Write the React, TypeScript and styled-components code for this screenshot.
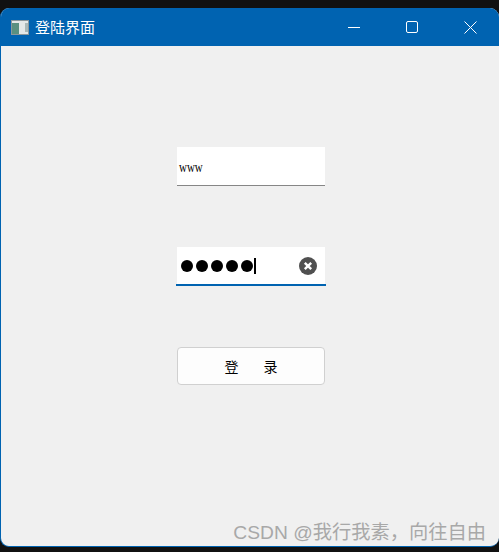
import React from "react";
import styled, { createGlobalStyle } from "styled-components";

const Global = createGlobalStyle`
  html, body { margin: 0; padding: 0; background: #111111; }
  body { font-family: "Liberation Sans", "Noto Sans CJK SC", sans-serif; }
`;

const Screen = styled.div`
  width: 499px;
  height: 552px;
  padding-top: 8px;
  box-sizing: border-box;
  background: #111111;
  overflow: hidden;
`;

const Window = styled.div`
  position: relative;
  width: 499px;
  height: 539px;
  box-sizing: border-box;
  display: flex;
  flex-direction: column;
  border-radius: 9px;
  overflow: hidden;
  background: #f0f0f0;
  border: 1px solid #0063b1;
  border-top: 0;
  border-right: 0;
`;

const TitleBar = styled.div`
  height: 38px;
  flex: none;
  margin-left: -1px;
  margin-right: -1px;
  display: flex;
  align-items: center;
  background: #0063b1;
  color: #ffffff;
`;

const AppIcon = styled.svg`
  width: 18px;
  height: 15px;
  margin-left: 11px;
  margin-right: 6px;
  flex: none;
`;

const Title = styled.span`
  font-family: "Noto Sans CJK SC", sans-serif;
  font-size: 15px;
  line-height: 20px;
  flex: 1;
`;

const WinButton = styled.div`
  width: 58.5px;
  height: 38px;
  display: flex;
  align-items: center;
  justify-content: center;
`;

const Content = styled.div`
  flex: 1;
  display: flex;
  flex-direction: column;
  align-items: flex-start;
  padding: 101px 0 0 176px;
`;

const Field = styled.div<{ $active?: boolean }>`
  position: relative;
  width: 148px;
  height: 39px;
  box-sizing: border-box;
  margin-bottom: 61px;
  display: flex;
  align-items: center;
  background: #ffffff;
  border-bottom: ${(p) => (p.$active ? "0" : "1px solid #868686")};
  padding-left: ${(p) => (p.$active ? "4px" : "2px")};
  padding-bottom: ${(p) => (p.$active ? "2px" : "0")};

  ${(p) =>
    p.$active &&
    `
    &::after {
      content: "";
      position: absolute;
      left: -1px;
      right: -1px;
      bottom: 0;
      height: 2px;
      background: #0063b1;
    }
  `}
`;

const FieldText = styled.span`
  font-family: "Liberation Serif", serif;
  font-size: 14px;
  line-height: 16px;
  color: #000000;
  transform: translateY(2px) scaleX(0.78);
  transform-origin: left center;
`;

const Dots = styled.div`
  display: flex;
  gap: 3px;
  flex: none;
`;

const Dot = styled.span`
  width: 12px;
  height: 12px;
  border-radius: 50%;
  background: #000000;
`;

const Caret = styled.span`
  width: 2px;
  height: 16px;
  margin-left: 1px;
  background: #000000;
  flex: none;
`;

const ClearIcon = styled.svg`
  width: 18px;
  height: 18px;
  margin-left: auto;
  margin-right: 8px;
  flex: none;
`;

const LoginButton = styled.div`
  width: 148px;
  height: 38px;
  box-sizing: border-box;
  padding-bottom: 1px;
  display: flex;
  align-items: center;
  justify-content: center;
  gap: 25px;
  background: #fdfdfd;
  border: 1px solid #d0d0d0;
  border-radius: 4px;
  font-family: "Noto Sans CJK SC", sans-serif;
  font-size: 14px;
  color: #000000;
`;

const Watermark = styled.div`
  position: absolute;
  right: 13px;
  bottom: 1px;
  font-family: "Liberation Sans", "Noto Sans CJK SC", sans-serif;
  font-size: 19.25px;
  line-height: 24px;
  color: #a8a8a8;
  white-space: nowrap;
`;

export default function App() {
  return (
    <Screen>
      <Global />
      <Window>
        <TitleBar>
          <AppIcon viewBox="0 0 18 15">
            <rect x="0.5" y="0.5" width="17" height="14" fill="#e4e8e8" stroke="#8b979c" />
            <rect x="1" y="3" width="7" height="11" fill="#5a9080" />
            <rect x="14" y="3" width="3" height="9" fill="#a9b8b8" />
          </AppIcon>
          <Title>登陆界面</Title>
          <WinButton>
            <svg width="12" height="12" viewBox="0 0 12 12">
              <path d="M0 6.5H12" stroke="#fff" strokeWidth="1" />
            </svg>
          </WinButton>
          <WinButton>
            <svg width="12" height="12" viewBox="0 0 12 12">
              <rect x="0.5" y="0.5" width="11" height="11" rx="1.5" fill="none" stroke="#fff" />
            </svg>
          </WinButton>
          <WinButton>
            <svg width="13" height="13" viewBox="0 0 13 13">
              <path d="M0.5 0.5L12.5 12.5M12.5 0.5L0.5 12.5" stroke="#fff" strokeWidth="1" />
            </svg>
          </WinButton>
        </TitleBar>
        <Content>
          <Field>
            <FieldText>www</FieldText>
          </Field>
          <Field $active>
            <Dots>
              {[0, 1, 2, 3, 4].map((i) => (
                <Dot key={i} />
              ))}
            </Dots>
            <Caret />
            <ClearIcon viewBox="0 0 18 18">
              <circle cx="9" cy="9" r="9" fill="#505050" />
              <path d="M5.8 5.8L12.2 12.2M12.2 5.8L5.8 12.2" stroke="#fff" strokeWidth="2.4" />
            </ClearIcon>
          </Field>
          <LoginButton>
            <span>登</span>
            <span>录</span>
          </LoginButton>
        </Content>
        <Watermark>CSDN @我行我素，向往自由</Watermark>
      </Window>
    </Screen>
  );
}
